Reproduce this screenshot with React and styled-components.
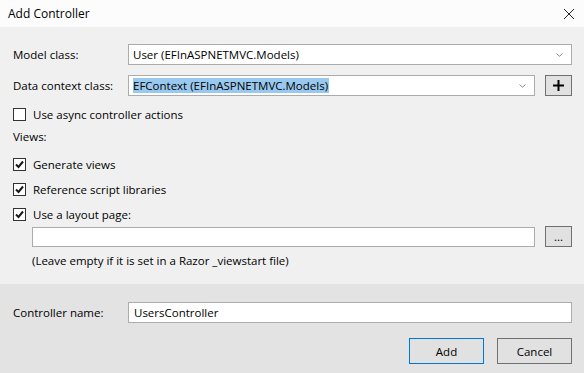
import styled, { createGlobalStyle } from "styled-components";

const GlobalStyle = createGlobalStyle`
  html, body {
    margin: 0;
    padding: 0;
    background: #f0f0f0;
  }
  body {
    font-family: "Open Sans", "Noto Sans", sans-serif;
    font-size: 11.5px;
    color: #000;
  }
`;

const Dialog = styled.div`
  width: 584px;
  height: 373px;
  display: flex;
  flex-direction: column;
  background: #f0f0f0;
  overflow: hidden;
`;

const TitleBar = styled.div`
  height: 27px;
  flex: none;
  background: #fcfcfc;
  display: flex;
  align-items: center;
  justify-content: space-between;
  padding: 0 8px 0 8px;
  box-sizing: border-box;
  font-size: 12px;
`;

const Close = styled.svg`
  width: 12px;
  height: 12px;
  margin-right: 1px;
`;

const Body = styled.div`
  flex: 1;
  padding: 17px 12px 0 13px;
  display: flex;
  flex-direction: column;
`;

const FieldRow = styled.div`
  display: grid;
  grid-template-columns: 115px 1fr ${(p) => (p.$extra ? "37px" : "")};
  align-items: center;
  height: 21px;
  margin-bottom: ${(p) => p.$gap || 0}px;
`;

const Label = styled.span`
  white-space: nowrap;
`;

const Select = styled.div`
  height: 21px;
  box-sizing: border-box;
  border: 1px solid #acacac;
  background: #fff;
  display: flex;
  align-items: center;
  justify-content: space-between;
  padding: 0 8px 0 4px;
  white-space: nowrap;
`;

const Highlight = styled.span`
  background: #99c9ef;
  line-height: 15px;
  padding-right: 1px;
`;

const SmallButton = styled.div`
  justify-self: end;
  width: 27px;
  height: 21px;
  box-sizing: border-box;
  border: 1px solid #707070;
  background: #e1e1e1;
  display: flex;
  align-items: center;
  justify-content: center;
`;

const CheckRow = styled.div`
  display: flex;
  align-items: center;
  gap: 7px;
  height: 13px;
  margin-top: ${(p) => p.$top || 0}px;
`;

const Box = styled.div`
  width: 13px;
  height: 13px;
  box-sizing: border-box;
  border: 1px solid #333;
  background: #fff;
  display: flex;
  align-items: center;
  justify-content: center;
`;

const SectionTitle = styled.div`
  margin-top: 8px;
  line-height: 16px;
`;

const PathRow = styled.div`
  display: grid;
  grid-template-columns: 1fr 37px;
  align-items: center;
  margin: 5px 0 0 19px;
  height: 21px;
`;

const TextBox = styled.div`
  height: ${(p) => p.$h || 20}px;
  box-sizing: border-box;
  border: 1px solid #acacac;
  background: #fff;
  display: flex;
  align-items: center;
  padding-left: 5px;
`;

const Hint = styled.div`
  margin: 6px 0 0 19px;
  line-height: 16px;
`;

const Footer = styled.div`
  height: 89px;
  flex: none;
  background: #e3e3e3;
  padding: 18px 12px 0 13px;
  box-sizing: border-box;
  display: flex;
  flex-direction: column;
`;

const NameRow = styled.div`
  display: grid;
  grid-template-columns: 115px 1fr;
  align-items: center;
`;

const Buttons = styled.div`
  display: flex;
  justify-content: flex-end;
  gap: 13px;
  margin-top: 15px;
`;

const Button = styled.div`
  width: 75px;
  height: 26px;
  box-sizing: border-box;
  border: 1px solid ${(p) => (p.$primary ? "#0078d7" : "#707070")};
  background: #e1e1e1;
  display: flex;
  align-items: center;
  justify-content: center;
`;

const Chevron = () => (
  <svg width="7" height="4" viewBox="0 0 7 4">
    <path d="M0.5 0.5 L3.5 3.2 L6.5 0.5" fill="none" stroke="#8a8a8a" strokeWidth="1" />
  </svg>
);

const Tick = () => (
  <svg width="9" height="9" viewBox="0 0 9 9">
    <path d="M1 4.5 L3.5 7 L8 1.5" fill="none" stroke="#1a1a1a" strokeWidth="2" />
  </svg>
);

function Check({ checked, label, top }) {
  return (
    <CheckRow $top={top}>
      <Box>{checked && <Tick />}</Box>
      <span>{label}</span>
    </CheckRow>
  );
}

export default function App() {
  return (
    <>
      <GlobalStyle />
      <Dialog>
        <TitleBar>
          <span>Add Controller</span>
          <Close viewBox="0 0 12 12">
            <path d="M1 1 L11 11 M11 1 L1 11" stroke="#222" strokeWidth="1" />
          </Close>
        </TitleBar>
        <Body>
          <FieldRow $gap={10}>
            <Label>Model class:</Label>
            <Select>
              <span>User (EFInASPNETMVC.Models)</span>
              <Chevron />
            </Select>
          </FieldRow>
          <FieldRow $extra>
            <Label>Data context class:</Label>
            <Select>
              <Highlight>EFContext (EFInASPNETMVC.Models)</Highlight>
              <Chevron />
            </Select>
            <SmallButton>
              <svg width="11" height="11" viewBox="0 0 11 11">
                <path d="M5.5 0 V11 M0 5.5 H11" stroke="#000" strokeWidth="2" />
              </svg>
            </SmallButton>
          </FieldRow>
          <Check label="Use async controller actions" top={12} />
          <SectionTitle>Views:</SectionTitle>
          <Check checked label="Generate views" top={13} />
          <Check checked label="Reference script libraries" top={12} />
          <Check checked label="Use a layout page:" top={12} />
          <PathRow>
            <TextBox />
            <SmallButton>...</SmallButton>
          </PathRow>
          <Hint>(Leave empty if it is set in a Razor _viewstart file)</Hint>
        </Body>
        <Footer>
          <NameRow>
            <Label>Controller name:</Label>
            <TextBox $h={21}>UsersController</TextBox>
          </NameRow>
          <Buttons>
            <Button $primary>Add</Button>
            <Button>Cancel</Button>
          </Buttons>
        </Footer>
      </Dialog>
    </>
  );
}
